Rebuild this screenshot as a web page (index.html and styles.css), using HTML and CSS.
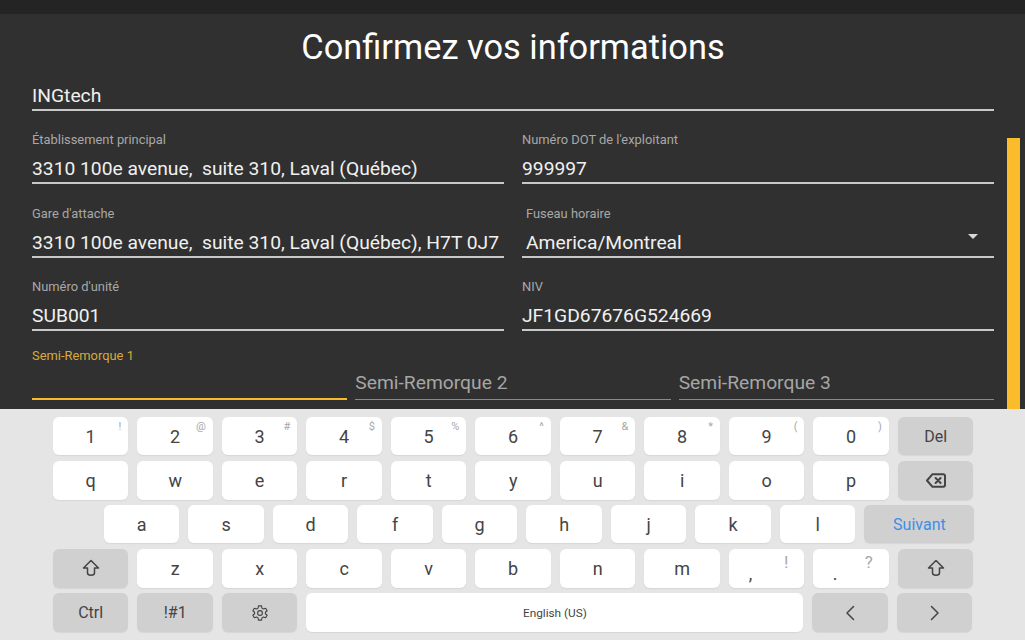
FILE: index.html
```html
<!DOCTYPE html>
<html lang="fr">
<head>
<meta charset="UTF-8">
<meta name="viewport" content="width=device-width, initial-scale=1.0">
<title>Confirmez vos informations</title>
<link rel="stylesheet" href="styles.css">
</head>
<body>
  <div class="topbar"></div>

  <main class="form">
    <h1>Confirmez vos informations</h1>

    <div class="field field-name"><div class="value">INGtech</div></div>

    <div class="row">
      <div class="field">
        <label>Établissement principal</label>
        <div class="value">3310 100e avenue,&nbsp; suite 310, Laval (Québec)</div>
      </div>
      <div class="field">
        <label>Numéro DOT de l'exploitant</label>
        <div class="value">999997</div>
      </div>
    </div>

    <div class="row">
      <div class="field">
        <label>Gare d'attache</label>
        <div class="value">3310 100e avenue,&nbsp; suite 310, Laval (Québec), H7T 0J7</div>
      </div>
      <div class="field field-select">
        <label>Fuseau horaire</label>
        <div class="value">America/Montreal</div>
        <span class="caret"></span>
      </div>
    </div>

    <div class="row">
      <div class="field">
        <label>Numéro d'unité</label>
        <div class="value">SUB001</div>
      </div>
      <div class="field">
        <label>NIV</label>
        <div class="value">JF1GD67676G524669</div>
      </div>
    </div>

    <div class="row row-trailers">
      <div class="field field-focus">
        <label>Semi-Remorque 1</label>
        <div class="value"></div>
      </div>
      <div class="field field-empty"><div class="value">Semi-Remorque 2</div></div>
      <div class="field field-empty"><div class="value">Semi-Remorque 3</div></div>
    </div>
  </main>

  <div class="scrollbar"></div>

  <section class="keyboard">
    <div class="kb-row">
      <div class="key">1<sup>!</sup></div>
      <div class="key">2<sup>@</sup></div>
      <div class="key">3<sup>#</sup></div>
      <div class="key">4<sup>$</sup></div>
      <div class="key">5<sup>%</sup></div>
      <div class="key">6<sup>^</sup></div>
      <div class="key">7<sup>&amp;</sup></div>
      <div class="key">8<sup>*</sup></div>
      <div class="key">9<sup>(</sup></div>
      <div class="key">0<sup>)</sup></div>
      <div class="key key-fn">Del</div>
    </div>
    <div class="kb-row kb-row-tall">
      <div class="key">q</div>
      <div class="key">w</div>
      <div class="key">e</div>
      <div class="key">r</div>
      <div class="key">t</div>
      <div class="key">y</div>
      <div class="key">u</div>
      <div class="key">i</div>
      <div class="key">o</div>
      <div class="key">p</div>
      <div class="key key-fn">
        <svg class="icon icon-bold" width="20" height="15" viewBox="0 0 20 15"><path d="M6.5 1.2h10.8a1.7 1.7 0 0 1 1.7 1.7v9.2a1.7 1.7 0 0 1-1.7 1.7H6.5L1 7.5z"/><path d="M9.6 5l5 5M14.6 5l-5 5"/></svg>
      </div>
    </div>
    <div class="kb-row kb-row-home">
      <div class="key">a</div>
      <div class="key">s</div>
      <div class="key">d</div>
      <div class="key">f</div>
      <div class="key">g</div>
      <div class="key">h</div>
      <div class="key">j</div>
      <div class="key">k</div>
      <div class="key">l</div>
      <div class="key key-fn key-next">Suivant</div>
    </div>
    <div class="kb-row kb-row-tall">
      <div class="key key-fn">
        <svg class="icon" width="18" height="18" viewBox="0 0 18 18"><path d="M9 1.5L1.5 9h4v5c0 1.2 1.4 2.2 3.5 2.2s3.5-1 3.5-2.2V9h4z"/></svg>
      </div>
      <div class="key">z</div>
      <div class="key">x</div>
      <div class="key">c</div>
      <div class="key">v</div>
      <div class="key">b</div>
      <div class="key">n</div>
      <div class="key">m</div>
      <div class="key key-punct"><span>,</span><sup>!</sup></div>
      <div class="key key-punct"><span>.</span><sup>?</sup></div>
      <div class="key key-fn">
        <svg class="icon" width="18" height="18" viewBox="0 0 18 18"><path d="M9 1.5L1.5 9h4v5c0 1.2 1.4 2.2 3.5 2.2s3.5-1 3.5-2.2V9h4z"/></svg>
      </div>
    </div>
    <div class="kb-row kb-row-tall">
      <div class="key key-fn">Ctrl</div>
      <div class="key key-fn">!#1</div>
      <div class="key key-fn">
        <svg class="icon" width="18" height="18" viewBox="0 0 24 24"><path d="M10 2.5h4l.6 3 2 1.1 2.9-1 2 3.4-2.3 2a7 7 0 0 1 0 2l2.3 2-2 3.4-2.9-1-2 1.1-.6 3h-4l-.6-3-2-1.1-2.9 1-2-3.4 2.3-2a7 7 0 0 1 0-2l-2.3-2 2-3.4 2.9 1 2-1.1z"/><circle cx="12" cy="12" r="3.2"/></svg>
      </div>
      <div class="key key-space">English (US)</div>
      <div class="key key-fn">
        <svg class="icon" width="12" height="16" viewBox="0 0 12 16"><path d="M9.5 1.5L3 8l6.5 6.5"/></svg>
      </div>
      <div class="key key-fn">
        <svg class="icon" width="12" height="16" viewBox="0 0 12 16"><path d="M2.5 1.5L9 8l-6.5 6.5"/></svg>
      </div>
    </div>
  </section>
</body>
</html>
```

FILE: styles.css
```css
html, body {
  margin: 0;
  height: 640px;
  overflow: hidden;
}

body {
  position: relative;
  font-family: Roboto, "Liberation Sans", sans-serif;
  background-color: #303030;
  color: #f0f0f0;
}

.topbar {
  height: 14px;
  background-color: #242424;
}

.form {
  height: 395px;
  padding: 0 31px 0 32px;
  box-sizing: border-box;
  overflow: hidden;
}

h1 {
  margin: 0;
  height: 67.5px;
  font-size: 34.4px;
  font-weight: 400;
  line-height: 67px;
  text-align: center;
  color: #fff;
}

.row {
  display: flex;
  gap: 18px;
  margin-top: 19.5px;
}

.row-trailers {
  gap: 8px;
  margin-top: 15px;
}

.field {
  position: relative;
  flex: 1 1 0;
  min-width: 0;
  display: flex;
  flex-direction: column;
  justify-content: flex-end;
  border-bottom: 2px solid #c8c8c8;
}

.field label {
  height: 21px;
  font-size: 12.9px;
  line-height: 19px;
  color: #a8a8a8;
}

.value {
  height: 31px;
  padding-top: 5px;
  box-sizing: border-box;
  font-size: 19.25px;
  line-height: 25px;
  white-space: nowrap;
}

.field-name .value {
  height: 27px;
  padding-top: 0;
  line-height: 27px;
}

.field-select label,
.field-select .value {
  padding-left: 4px;
}

.caret {
  position: absolute;
  right: 16px;
  top: 30px;
  border-left: 5.5px solid transparent;
  border-right: 5.5px solid transparent;
  border-top: 5.5px solid #d8d8d8;
}

.field-focus {
  border-bottom-color: #f8bb2c;
}

.field-focus label {
  color: #d8aa3c;
}

.field-empty {
  border-bottom: 1px solid #8a8a8a;
}

.field-empty .value {
  color: #a6a6a6;
  margin-bottom: 3px;
}

.scrollbar {
  position: absolute;
  left: 1007px;
  top: 138px;
  width: 13px;
  height: 271px;
  background-color: #fbbc2c;
}

.keyboard {
  height: 231px;
  padding: 8px 51px 0 52.9px;
  box-sizing: border-box;
  display: flex;
  flex-direction: column;
  gap: 5.5px;
  background-color: #e5e5e5;
  color: #444;
}

.kb-row {
  display: flex;
  gap: 9px;
  height: 38px;
}

.kb-row-tall {
  height: 39px;
}

.kb-row-home {
  padding-left: 51px;
}

.key {
  position: relative;
  flex: 0 0 75.5px;
  display: flex;
  align-items: center;
  justify-content: center;
  border-radius: 6px;
  background-color: #fff;
  box-shadow: 0 1px 1px #d6d6d6;
  font-size: 18px;
}

.key sup {
  position: absolute;
  top: 4px;
  right: 7px;
  font-size: 11px;
  line-height: 11px;
  color: #a8a8a8;
}

.key-fn {
  background-color: #d0d0d0;
  font-size: 16px;
}

.key-next {
  flex-basis: 110px;
  color: #3d8ee6;
}

.key-punct span {
  position: relative;
  right: 16px;
  top: 5px;
}

.key-punct sup {
  top: 5px;
  right: 16px;
  font-size: 17px;
  line-height: 17px;
}

.key-space {
  flex-basis: 497px;
  font-size: 11.8px;
}

.icon {
  fill: none;
  stroke: #444;
  stroke-width: 1.5;
  stroke-linejoin: round;
  stroke-linecap: round;
}

.icon-bold {
  stroke-width: 2;
}
```
